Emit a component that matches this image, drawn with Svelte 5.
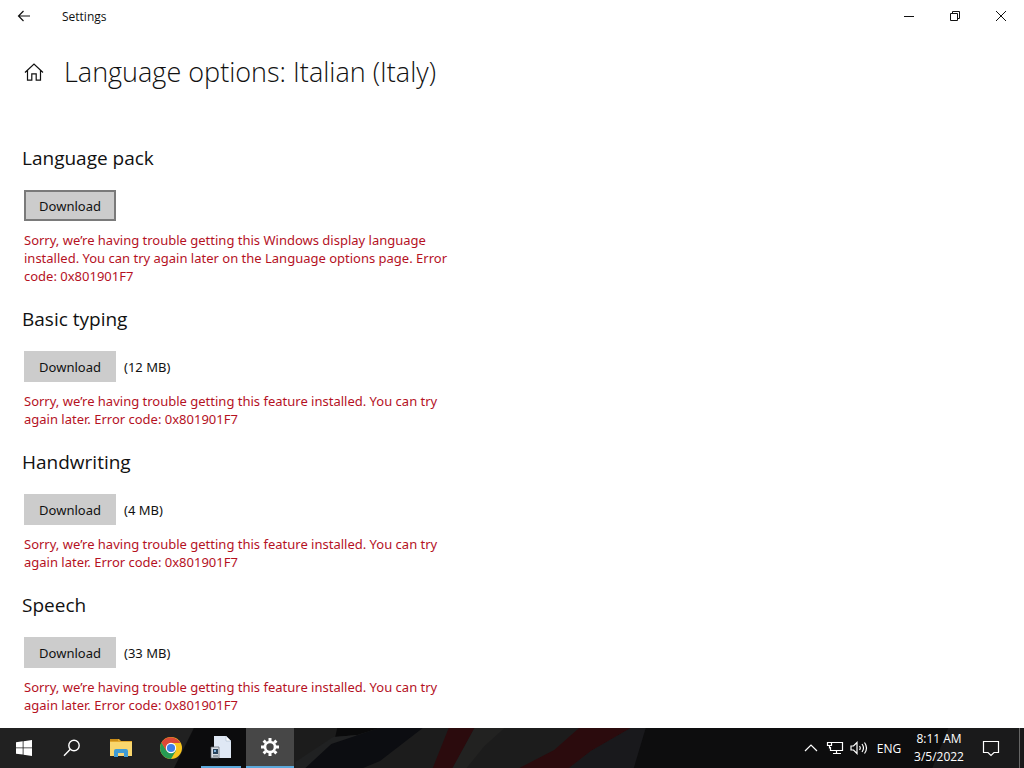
<script>
  const sections = [
    {
      id: 'pack',
      title: 'Language pack',
      size: '',
      focused: true,
      error:
        'Sorry, we’re having trouble getting this Windows display language installed. You can try again later on the Language options page. Error code: 0x801901F7'
    },
    { id: 'typing', title: 'Basic typing', size: '(12 MB)' },
    { id: 'handwriting', title: 'Handwriting', size: '(4 MB)' },
    { id: 'speech', title: 'Speech', size: '(33 MB)' }
  ];
  const featureError =
    'Sorry, we’re having trouble getting this feature installed. You can try again later. Error code: 0x801901F7';
</script>

<div class="screen">
  <header class="titlebar">
    <button class="back" aria-label="Back">
      <svg width="14" height="12" viewBox="0 0 14 12"><path d="M13 6H1.5M6.5 1L1.5 6l5 5" /></svg>
    </button>
    <span class="app-name">Settings</span>
    <div class="window-controls">
      <button aria-label="Minimize">
        <svg width="10" height="10" viewBox="0 0 10 10"><path d="M0 5.5h10" /></svg>
      </button>
      <button aria-label="Restore">
        <svg width="10" height="10" viewBox="0 0 10 10"><path d="M.5 2.5h7v7h-7zM2.5 2.5v-2h7v7h-2" /></svg>
      </button>
      <button aria-label="Close">
        <svg width="10" height="10" viewBox="0 0 10 10"><path d="M0 0l10 10M10 0L0 10" /></svg>
      </button>
    </div>
  </header>

  <main>
    <div class="page-title">
      <button class="home" aria-label="Home">
        <svg width="20" height="18" viewBox="0 0 20 18"><path d="M1 9.5L10 1l9 8.5M3.5 7.5v9.7h4.3v-6.4h4.4v6.4h4.3V7.5" /></svg>
      </button>
      <h1>Language options: Italian (Italy)</h1>
    </div>

    {#each sections as s (s.id)}
      <section aria-labelledby={s.id}>
        <h2 id={s.id}>{s.title}</h2>
        <div class="action">
          <button class="download" class:focused={s.focused}>Download</button>
          {#if s.size}<span>{s.size}</span>{/if}
        </div>
        <p>{s.error ?? featureError}</p>
      </section>
    {/each}
  </main>

  <footer class="taskbar">
    <svg class="wallpaper" viewBox="0 0 854 40" preserveAspectRatio="none" aria-hidden="true">
      <path d="M20 0h60v40H0z" fill="#0c0c0d" />
      <g transform="translate(122)">
        <path d="M-42 0h770v40H-42z" fill="#1c1c1c" />
        <path d="M42 0h42L62 7 40 9z" fill="#0a0a0b" />
        <path d="M0 34L38 9 62 7 14 40H0z" fill="#202122" />
        <path d="M84 0h44L85 33 68 40H10l26-24z" fill="#0c0d11" />
        <path d="M154 0h26l-22 40h-20z" fill="#2b0b0d" />
        <path d="M180 0h30l-20 18-18 22h-14z" fill="#222221" />
        <path d="M285 0h52l-40 23-22 17h-50l35-18z" fill="#2b0b0d" />
        <path d="M337 0h29l-14 40h-77l22-17z" fill="#19191c" />
        <path d="M352 0h380v40H340z" fill="#0d0d0e" />
        <path d="M656 0h76v40h-92z" fill="#1a1a1b" />
      </g>
    </svg>

    <nav class="apps" aria-label="Taskbar">
      <button aria-label="Start">
        <svg width="16" height="16" viewBox="0 0 16 16" fill="#fff"><path d="M0 2.2L6.7 1.3v6.2H0zM7.5 1.2L16 0v7.5H7.5zM0 8.3h6.7v6.3L0 13.7zM7.5 8.3H16V16l-8.5-1.2z" /></svg>
      </button>
      <button aria-label="Search">
        <svg width="18" height="18" viewBox="0 0 18 18" fill="none" stroke="#fff" stroke-width="1.4"><circle cx="11" cy="6.5" r="5.2" /><path d="M7.3 10.3L1 16.8" /></svg>
      </button>
      <button class="wide" aria-label="File Explorer">
        <svg width="22" height="18" viewBox="0 0 22 18">
          <path d="M0 0h9l2 2h11v5H0z" fill="#e3a92e" />
          <path d="M0 0h8v2H0z" fill="#c98c18" />
          <path d="M0 3h22v14H0z" fill="#f9d66d" />
          <path d="M4 18V12q0-2 2-2h10q2 0 2 2v6h-4v-4H8v4z" fill="#3f9bd5" />
          <path d="M8 14h6v3H8z" fill="#f5d579" />
        </svg>
      </button>
      <button class="wide" aria-label="Google Chrome">
        <svg width="22" height="22" viewBox="0 0 22 22">
          <circle cx="11" cy="11" r="11" fill="#f9c51d" />
          <path d="M1.5 5.5A11 11 0 0 0 11 22l5-8.5L11 11 6.500 13.500z" fill="#269b54" />
          <path d="M1.5 5.5L6.5 14 11 6h9.5A11 11 0 0 0 1.5 5.5z" fill="#dc4837" />
          <circle cx="11" cy="11" r="5.2" fill="#fff" />
          <circle cx="11" cy="11" r="4.1" fill="#3f7fe8" />
        </svg>
      </button>
      <button class="running" aria-label="Installer">
        <svg width="22" height="24" viewBox="0 0 22 24">
          <path d="M4 1h12l5 5v17H4z" fill="#dfe8f4" />
          <path d="M16 1v5h5z" fill="#fff" stroke="#aab9cc" stroke-width=".6" />
          <path d="M1 12h8v11H1z" fill="#d9dee4" stroke="#5b636c" stroke-width=".7" />
          <path d="M3 14h5v5H3z" fill="#28435c" />
          <path d="M4 15h2v2H4z" fill="#82b3db" />
          <path d="M3 21h5" stroke="#55606b" />
        </svg>
      </button>
      <button class="running active" aria-label="Settings">
        <svg width="20" height="20" viewBox="0 0 20 20" fill="none" stroke="#fff">
          <circle cx="10" cy="10" r="5" stroke-width="2.6" />
          <path stroke-width="3" d="M10 4V1M10 16v3M4 10H1M16 10h3M5.8 5.8L3.6 3.600M14.2 14.2l2.2 2.2M5.8 14.2l-2.2 2.2M14.2 5.8l2.2-2.2" />
        </svg>
      </button>
    </nav>

    <div class="tray">
      <button aria-label="Show hidden icons">
        <svg width="14" height="8" viewBox="0 0 14 8"><path d="M1 7l6-6 6 6" /></svg>
      </button>
      <button aria-label="Network">
        <svg width="18" height="14" viewBox="0 0 18 14"><path d="M6 1.5h10.5v8H4.5V6M10.5 9.5v3M7 12.5h8M1.5 1.5h4v3h-4zM3.5 4.5v3" /></svg>
      </button>
      <button aria-label="Volume">
        <svg width="18" height="14" viewBox="0 0 18 14"><path d="M1 5h2.5L7 1.5v11L3.5 9H1zM9.5 5q1.5 2 0 4M12 3q3 4 0 8M14.5 1.5q4 5.5 0 11" /></svg>
      </button>
      <button class="lang">ENG</button>
      <button class="clock"><span>8:11 AM</span><span>3/5/2022</span></button>
      <button class="notify" aria-label="Notifications">
        <svg width="18" height="17" viewBox="0 0 18 17"><path d="M1.5 1.5h15v11H12l-3 3-3-3H1.5z" /></svg>
      </button>
      <button class="desktop" aria-label="Show desktop"></button>
    </div>
  </footer>
</div>

<style>
  :global(body) {
    margin: 0;
  }
  .screen {
    display: flex;
    flex-direction: column;
    min-height: 100vh;
    background: #fff;
    color: #111;
    font-family: 'Segoe UI', 'Noto Sans', 'Open Sans', sans-serif;
    font-size: 13px;
  }
  button {
    display: flex;
    align-items: center;
    justify-content: center;
    padding: 0;
    border: 0;
    background: none;
    color: inherit;
    font: inherit;
  }
  .titlebar {
    display: flex;
    height: 32px;
  }
  .titlebar svg,
  .home svg {
    fill: none;
    stroke: #111;
    stroke-width: 1;
  }
  .back {
    width: 48px;
  }
  .titlebar .back svg,
  .home svg {
    stroke-width: 1.2;
  }
  .app-name {
    margin-left: 14px;
    font-family: 'Segoe UI', 'Open Sans', sans-serif;
    font-size: 12px;
    line-height: 33px;
  }
  .window-controls {
    display: flex;
    margin-left: auto;
  }
  .window-controls button {
    width: 46px;
  }
  main {
    flex: 1;
    padding: 0 24px;
  }
  .page-title {
    display: flex;
    align-items: center;
    gap: 20px;
    height: 80px;
    margin-bottom: 12px;
  }
  .home {
    width: 20px;
  }
  h1,
  h2 {
    font-family: 'Segoe UI', 'Open Sans', sans-serif;
  }
  h1 {
    margin: 0;
    font-size: 27px;
    font-weight: 300;
    line-height: 36px;
  }
  section {
    padding-top: 20px;
  }
  h2 {
    margin: 0 0 18px -2px;
    font-size: 19px;
    font-weight: 400;
    line-height: 28px;
  }
  .action {
    display: flex;
    align-items: center;
    gap: 8px;
  }
  .download {
    width: 92px;
    height: 31px;
    background: #ccc;
  }
  .download.focused {
    border: 2px solid #7a7a7a;
  }
  p {
    max-width: 440px;
    margin: 10px 0 0;
    color: #b5121f;
    line-height: 18px;
  }
  .taskbar {
    position: relative;
    display: flex;
    justify-content: space-between;
    height: 40px;
    background: #212121;
    color: #fff;
    font-family: 'Segoe UI', 'Open Sans', sans-serif;
  }
  .wallpaper {
    position: absolute;
    right: 0;
    width: 83%;
    height: 100%;
  }
  .apps,
  .tray {
    position: relative;
    display: flex;
  }
  .apps button {
    width: 48px;
    box-sizing: border-box;
  }
  .apps .wide {
    width: 50px;
  }
  .apps .running {
    width: 40px;
    margin-left: 5px;
    border-bottom: 2px solid #5ca9dc;
  }
  .apps .active {
    width: 48px;
    background: #474747;
  }
  .tray svg {
    fill: none;
    stroke: #fff;
    stroke-width: 1.2;
  }
  .tray button {
    width: 24px;
    font-size: 12px;
  }
  .tray .lang {
    width: 36px;
  }
  .tray .clock {
    flex-direction: column;
    width: 64px;
    line-height: 18px;
  }
  .tray .notify {
    width: 40px;
  }
  .tray .desktop {
    width: 5px;
    margin-left: 8px;
    border-left: 1px solid #666;
  }
</style>
